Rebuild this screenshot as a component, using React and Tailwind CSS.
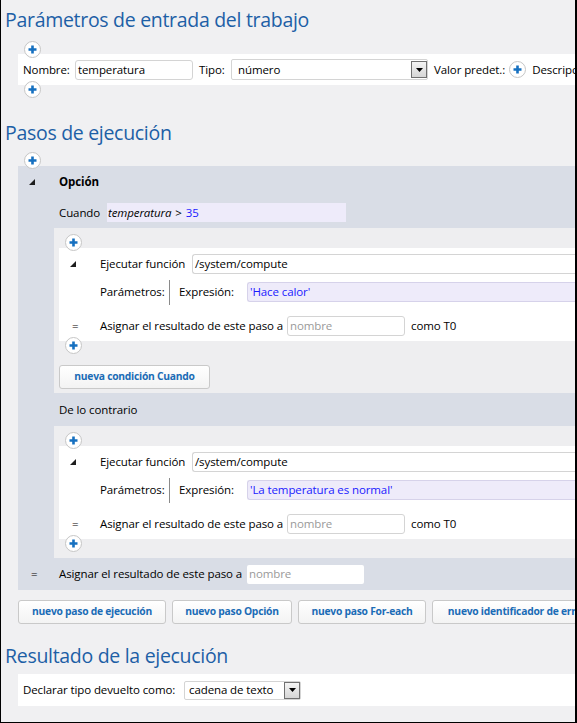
import React from "react";

function Plus() {
  return (
    <div className="w-[17px] h-[17px] rounded-full border border-[#c6c6c6] bg-white flex items-center justify-center">
      <svg width="9" height="9" viewBox="0 0 9 9">
        <path d="M3.2 0.5h2.6v2.7h2.7v2.6H5.8v2.7H3.2V5.8H0.5V3.2h2.7z" fill="#1670c0" />
      </svg>
    </div>
  );
}

function Tri() {
  return (
    <svg width="6" height="6" viewBox="0 0 6 6">
      <polygon points="6,0 6,6 0,6" fill="#1e1e1e" />
    </svg>
  );
}

function DropBtn() {
  return (
    <div className="w-[16px] h-[17px] border border-[#707070] bg-gradient-to-b from-[#f4f4f4] to-[#d6d6d6] flex items-center justify-center shrink-0">
      <svg width="7" height="4" viewBox="0 0 7 4">
        <polygon points="0,0 7,0 3.5,4" fill="#000" />
      </svg>
    </div>
  );
}

function Btn({ children, w }) {
  return (
    <div className={`h-[24px] ${w} shrink-0 border border-[#c9c9c9] rounded-[3px] bg-gradient-to-b from-white to-[#f3f3f3] flex items-center justify-center text-[#1b6cb6] font-bold text-[10.3px] tracking-[-0.25px] whitespace-nowrap overflow-hidden`}>
      {children}
    </div>
  );
}

function StepBlock({ expr }) {
  return (
    <div className="ml-[36px] bg-[#eeeef0]">
      <div className="h-[20px] pl-[11px] pt-[6px] relative z-10">
        <Plus />
      </div>
      <div className="ml-[5px] bg-white h-[93px] pt-[6px]">
        <div className="flex items-center h-[20px]">
          <div className="w-[41px] pl-[11px] flex items-center shrink-0"><Tri /></div>
          <span className="w-[92px] shrink-0">Ejecutar función</span>
          <div className="flex-1 h-[20px] border border-[#d4d4d4] rounded-l-[3px] border-r-0 bg-white flex items-center px-[2px]">/system/compute</div>
        </div>
        <div className="flex items-center h-[20px] mt-[8px]">
          <div className="w-[41px] shrink-0" />
          <span className="w-[69px] shrink-0">Parámetros:</span>
          <div className="w-px h-[25px] bg-[#8a8a8a] shrink-0" />
          <span className="w-[77px] shrink-0 pl-[9px]">Expresión:</span>
          <div className="flex-1 h-[20px] border border-[#d6d2ea] border-r-0 rounded-l-[3px] bg-[#eeebfa] flex items-center px-[2px] text-[#1a1aff]">{expr}</div>
        </div>
        <div className="flex items-center h-[20px] mt-[14px] whitespace-nowrap">
          <div className="w-[41px] pl-[13px] shrink-0">=</div>
          <span className="w-[187px] shrink-0">Asignar el resultado de este paso a</span>
          <div className="w-[118px] h-[20px] border border-[#d4d4d4] rounded-[3px] flex items-center px-[2px] text-[#9a9a9a] shrink-0">nombre</div>
          <span className="ml-[6px]">como T0</span>
        </div>
      </div>
      <div className="h-[17px] -mt-[4px] pl-[11px] relative z-10">
        <Plus />
      </div>
    </div>
  );
}

export default function App() {
  return (
    <div className="w-[577px] h-[723px] bg-[#f0f0f2] border-l border-r-2 border-b border-black overflow-hidden text-[11.5px] tracking-[-0.1px] text-black font-['Open_Sans','Noto_Sans',sans-serif]">
      <h2 className="text-[19.5px] tracking-[-0.3px] leading-[28px] text-[#1d5fa6] pl-[4px] pt-[6px] whitespace-nowrap">Parámetros de entrada del trabajo</h2>
      <div className="pl-[17px]">
        <div className="h-[20px] pl-[6px] pt-[7px] relative z-10">
          <Plus />
        </div>
        <div className="h-[31px] bg-white flex items-center pl-[5px] whitespace-nowrap">
          <span className="w-[52px] shrink-0">Nombre:</span>
          <div className="w-[118px] h-[20px] border border-[#d4d4d4] rounded-[3px] flex items-center px-[2px] shrink-0">temperatura</div>
          <span className="w-[38px] shrink-0 pl-[6px]">Tipo:</span>
          <div className="w-[197px] h-[21px] border border-[#d4d4d4] rounded-[2px] flex items-center pl-[6px] shrink-0">
            <span className="flex-1">número</span>
            <DropBtn />
          </div>
          <span className="ml-[6px]">Valor predet.:</span>
          <div className="ml-[4px]"><Plus /></div>
          <span className="ml-[6px]">Descripción:</span>
        </div>
        <div className="h-[17px] -mt-[4px] pl-[6px] relative z-10">
          <Plus />
        </div>
      </div>

      <h2 className="text-[19.5px] tracking-[-0.3px] leading-[28px] text-[#1d5fa6] pl-[4px] mt-[21px] whitespace-nowrap">Pasos de ejecución</h2>
      <div className="h-[19px] pl-[23px] pt-[5px] relative z-10">
        <Plus />
      </div>
      <div className="ml-[17px] bg-[#d9dde6]">
        <div className="h-[31px] flex items-center">
          <div className="w-[41px] pl-[11px] flex items-center"><Tri /></div>
          <span className="font-bold">Opción</span>
        </div>
        <div className="h-[31px] flex items-center">
          <div className="w-[41px] shrink-0" />
          <span className="w-[48px] shrink-0">Cuando</span>
          <div className="w-[239px] h-[19px] bg-[#eeebfa] flex items-center px-[1px] whitespace-nowrap">
            <span className="italic">temperatura</span>
            <span className="ml-[4px]">&gt;</span>
            <span className="ml-[4px] text-[#1a1aff]">35</span>
          </div>
        </div>
        <StepBlock expr="'Hace calor'" />
        <div className="ml-[36px] bg-[#eeeef0] pt-[11px] pb-[4px] pl-[5px]">
          <Btn w="w-[151px]">nueva condición Cuando</Btn>
        </div>
        <div className="h-[33px] flex items-center pl-[41px]">De lo contrario</div>
        <StepBlock expr="'La temperatura es normal'" />
        <div className="ml-[36px] bg-[#eeeef0] h-[6px]" />
        <div className="h-[32px] flex items-center whitespace-nowrap">
          <div className="w-[41px] pl-[13px] shrink-0">=</div>
          <span className="w-[188px] shrink-0">Asignar el resultado de este paso a</span>
          <div className="w-[117px] h-[19px] bg-white rounded-[2px] flex items-center px-[2px] text-[#9a9a9a]">nombre</div>
        </div>
      </div>

      <div className="flex gap-[6px] ml-[17px] mt-[10px]">
        <Btn w="w-[148px]">nuevo paso de ejecución</Btn>
        <Btn w="w-[120px]">nuevo paso Opción</Btn>
        <Btn w="w-[128px]">nuevo paso For-each</Btn>
        <Btn w="w-[170px]">nuevo identificador de error</Btn>
      </div>

      <h2 className="text-[19.5px] tracking-[-0.3px] leading-[28px] text-[#1d5fa6] pl-[4px] mt-[18px] whitespace-nowrap">Resultado de la ejecución</h2>
      <div className="ml-[17px] mt-[4px] h-[32px] bg-white flex items-center pl-[5px] whitespace-nowrap">
        <span className="w-[161px] shrink-0">Declarar tipo devuelto como:</span>
        <div className="w-[117px] h-[19px] border border-[#d4d4d4] rounded-[2px] flex items-center pl-[4px]">
          <span className="flex-1">cadena de texto</span>
          <DropBtn />
        </div>
      </div>
    </div>
  );
}
